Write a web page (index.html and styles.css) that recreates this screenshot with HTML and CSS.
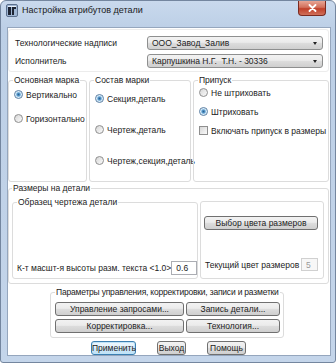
FILE: index.html
```html
<!DOCTYPE html>
<html lang="ru">
<head>
    <meta charset="UTF-8">
    <title>Настройка атрибутов детали</title>
    <link rel="stylesheet" href="styles.css">
</head>
<body>
    <div class="window">
        <div class="titlebar">
            <svg class="app-icon" width="12" height="13" viewBox="0 0 12 13">
                <rect x="0.5" y="0.5" width="11" height="12" rx="1.5" fill="#9fb6d3" stroke="#5b6f8c"/>
                <rect x="2" y="2" width="3" height="9" fill="#1d2433"/>
                <path d="M6 3h4v2H8v6H6z" fill="#1d2433"/>
                <rect x="2" y="2" width="8" height="1" fill="#e8f0fa"/>
            </svg>
            <span class="title">Настройка атрибутов детали</span>
            <div class="close-btn">
                <svg width="9" height="8" viewBox="0 0 9 8">
                    <path d="M1.5 1l6 6M7.5 1l-6 6" stroke="#fff" stroke-width="1.8" stroke-linecap="round"/>
                </svg>
            </div>
        </div>

        <div class="client">
            <div class="top-box">
                <div class="field-row">
                    <label>Технологические надписи</label>
                    <div class="combo">ООО_Завод_Залив<span class="arrow"></span></div>
                </div>
                <div class="field-row">
                    <label>Исполнитель</label>
                    <div class="combo">Карпушкина Н.Г.&nbsp; Т.Н. - 30336<span class="arrow"></span></div>
                </div>
            </div>

            <div class="marks-row">
                <fieldset class="box mark-main">
                    <legend>Основная марка</legend>
                    <label class="opt"><input type="radio" name="main" checked>Вертикально</label>
                    <label class="opt"><input type="radio" name="main">Горизонтально</label>
                </fieldset>
                <fieldset class="box mark-parts">
                    <legend>Состав марки</legend>
                    <label class="opt"><input type="radio" name="parts" checked>Секция,деталь</label>
                    <label class="opt"><input type="radio" name="parts">Чертеж,деталь</label>
                    <label class="opt"><input type="radio" name="parts">Чертеж,секция,деталь</label>
                </fieldset>
                <fieldset class="box allowance">
                    <legend>Припуск</legend>
                    <label class="opt"><input type="radio" name="hatch">Не штриховать</label>
                    <label class="opt"><input type="radio" name="hatch" checked>Штриховать</label>
                    <label class="opt"><input type="checkbox">Включать припуск в размеры</label>
                </fieldset>
            </div>

            <fieldset class="box sizes">
                <legend>Размеры на детали</legend>
                <div class="sizes-inner">
                    <fieldset class="box sample">
                        <legend>Образец чертежа детали</legend>
                        <div class="scale-row">
                            <span>К-т масшт-я высоты разм. текста &lt;1.0&gt;</span>
                            <input class="edit" type="text" value="0.6">
                        </div>
                    </fieldset>
                    <div class="box color-box">
                        <button class="btn color-btn">Выбор цвета размеров</button>
                        <div class="color-row">
                            <span>Текущий цвет размеров</span>
                            <input class="edit disabled" type="text" value="5" disabled>
                        </div>
                    </div>
                </div>
            </fieldset>

            <fieldset class="box params">
                <legend>Параметры управления, корректировки, записи и разметки</legend>
                <div class="params-grid">
                    <button class="btn">Управление запросами...</button>
                    <button class="btn">Запись детали...</button>
                    <button class="btn">Корректировка...</button>
                    <button class="btn">Технология...</button>
                </div>
            </fieldset>

            <div class="actions">
                <button class="btn default apply">Применить</button>
                <button class="btn quit">Выход</button>
                <button class="btn help">Помощь</button>
            </div>
        </div>
    </div>
</body>
</html>
```

FILE: styles.css
```css
* {
    box-sizing: border-box;
}

body {
    margin: 0;
    font-family: "Liberation Sans", Arial, sans-serif;
    font-size: 8.5px;
    color: #222;
    background: #fff;
    white-space: nowrap;
}

.window {
    width: 336px;
    height: 363px;
    display: flex;
    flex-direction: column;
    padding: 0 4px 6px 6px;
    background: linear-gradient(#c9d9ed, #bccfe6 28px, #c4d5ea);
    border: 1px solid #74869f;
    border-radius: 6px 6px 3px 3px;
}

.titlebar {
    height: 27px;
    margin: 0 -4px 0 -6px;
    padding-left: 5px;
    display: flex;
    align-items: flex-start;
}

.app-icon {
    margin-top: 3px;
}

.title {
    margin: 4px 0 0 4px;
    font-size: 9px;
    color: #1a1a1a;
}

.close-btn {
    margin-left: auto;
    margin-right: 9px;
    width: 28px;
    height: 15px;
    display: flex;
    align-items: center;
    justify-content: center;
    border: 1px solid #7a2a20;
    border-top: none;
    border-radius: 0 0 4px 4px;
    background: linear-gradient(#e8a595, #d2705c 45%, #c0402a 55%, #d0705a);
}

.client {
    flex: 1;
    background: #fff;
    border: 1px solid #95a6bd;
    padding: 1px 1px 0 0;
    display: flex;
    flex-direction: column;
}

/* group frames */
.box {
    margin: 0;
    min-width: 0;
    border: 1px solid #dcdcdc;
    border-radius: 3px;
}

legend {
    padding: 0 1px;
    line-height: 11px;
}

.top-box {
    border: 1px solid #ececec;
    border-radius: 3px;
    padding: 6px 5px 3px 5px;
    display: flex;
    flex-direction: column;
    gap: 4px;
}

.field-row {
    display: flex;
    align-items: center;
}

.field-row label {
    width: 133px;
    padding-left: 1px;
}

.combo {
    flex: 1;
    height: 14px;
    position: relative;
    padding-left: 4px;
    line-height: 12px;
    border: 1px solid #8e8f8f;
    border-radius: 3px;
    background: linear-gradient(#f2f2f2, #ebebeb 45%, #dddddd 50%, #cfcfcf);
}

.arrow {
    position: absolute;
    right: 5px;
    top: 5px;
    border-left: 2px solid transparent;
    border-right: 2px solid transparent;
    border-top: 3px solid #222;
}

.marks-row {
    margin-top: 3px;
    height: 107px;
    display: flex;
    gap: 2px;
}

.marks-row .box {
    display: flex;
    flex-direction: column;
    padding: 0 5px;
}

.marks-row legend {
    margin-left: -1px;
}

.mark-main {
    width: 79px;
    padding-top: 2px !important;
    gap: 11px;
}

.mark-parts {
    width: 102px;
    padding-top: 6px !important;
    gap: 18px;
}

.allowance {
    flex: 1;
    gap: 6px;
}

.opt {
    height: 13px;
    display: flex;
    align-items: center;
}

.opt input {
    flex: none;
    appearance: none;
    margin: 0 3px 0 0;
    width: 9px;
    height: 9px;
    border: 1px solid #8f8f8f;
    background: linear-gradient(135deg, #d6d6d6, #fbfbfb);
}

.opt input[type="radio"] {
    border-radius: 50%;
}

.opt input[type="radio"]:checked {
    background: radial-gradient(circle, #2a5f8f 0, #5a9ccf 1.6px, #c6e2f5 2.6px, #eef6fc 3.5px);
    border-color: #5b7fa3;
}

.sizes {
    margin-top: 1px;
    padding: 0 4px 4px 3px;
}

.sizes-inner {
    height: 85px;
    display: flex;
    gap: 2px;
}

.sample {
    width: 186px;
    margin-top: 3px;
    padding: 0 1px 3px 4px;
    display: flex;
    flex-direction: column;
    justify-content: flex-end;
}

.scale-row {
    display: flex;
    align-items: center;
    justify-content: space-between;
}

.edit {
    flex: none;
    width: 26px;
    height: 14px;
    padding: 0 0 0 4px;
    font: inherit;
    color: #222;
    border: 1px solid #abadb3;
    background: #fff;
}

.edit.disabled {
    width: 17px;
    height: 13px;
    color: #9a9a9a;
    border-color: #d0d0d0;
    background: #f7f7f7;
}

.color-box {
    flex: 1;
    margin-top: 7px;
    padding: 0 5px 7px 3px;
    display: flex;
    flex-direction: column;
}

.color-btn {
    margin-top: 14px;
    height: 13px;
}

.color-row {
    margin-top: auto;
    padding-left: 1px;
    display: flex;
    align-items: center;
    justify-content: space-between;
}

.btn {
    font: inherit;
    color: #222;
    height: 14px;
    padding: 0;
    line-height: 12px;
    border: 1px solid #707070;
    border-radius: 3px;
    background: linear-gradient(#f2f2f2, #ebebeb 45%, #dddddd 50%, #cfcfcf);
}

.btn.default {
    border-color: #3c7fb1;
    box-shadow: inset 0 0 0 1px #bfe3f8;
    background: linear-gradient(#eef7fd, #e0f1fc 45%, #cfe9f9 50%, #bfe0f5);
}

.params {
    margin: 3px 0 0 42px;
    width: 234px;
    padding: 0 3px 4px 4px;
}

.params legend {
    letter-spacing: -0.2px;
}

.params-grid {
    margin-top: 4px;
    display: grid;
    grid-template-columns: 129px 94px;
    gap: 3px 2px;
}

.actions {
    margin-top: 3px;
    display: flex;
    justify-content: center;
    gap: 21px;
}

.apply {
    width: 45px;
}

.quit {
    width: 29px;
}

.help {
    width: 39px;
}
```
